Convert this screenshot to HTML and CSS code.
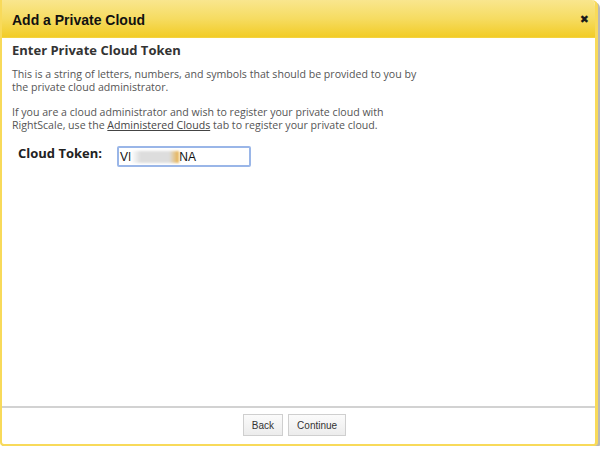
FILE: index.html
```html
<!DOCTYPE html>
<html>
<head>
<meta charset="utf-8">
<link rel="stylesheet" href="styles.css">
</head>
<body>
<div class="dialog">
  <div class="header">
    <span class="title">Add a Private Cloud</span>
    <span class="close">&#10006;</span>
  </div>
  <div class="content">
    <h2 class="heading">Enter Private Cloud Token</h2>
    <p class="text">This is a string of letters, numbers, and symbols that should be provided to you by<br>the private cloud administrator.</p>
    <p class="text">If you are a cloud administrator and wish to register your private cloud with<br>RightScale, use the <a class="link" href="#">Administered Clouds</a> tab to register your private cloud.</p>
    <div class="field">
      <label class="label">Cloud Token:</label>
      <div class="input"><span>VI</span><span class="blur"></span><span>NA</span></div>
    </div>
  </div>
  <div class="footer">
    <button class="btn">Back</button>
    <button class="btn">Continue</button>
  </div>
</div>
</body>
</html>
```
FILE: styles.css
```css
html, body { margin: 0; padding: 0; background: #fff; }
.dialog {
  width: 593px;
  height: 444px;
  border: 2px solid #f8da5a;
  border-right-width: 3px;
  border-top: 0;
  border-radius: 0 6px 4px 4px;
  box-shadow: 2px 2px 0 #b8b8b8;
  display: flex;
  flex-direction: column;
  background: #fff;
  overflow: hidden;
}
.header {
  height: 38px;
  flex: none;
  background: linear-gradient(#f9e68e, #f6dc62 50%, #f2cc26);
  border-bottom: 1px solid #f4d23e;
  display: flex;
  align-items: center;
  justify-content: space-between;
  padding: 0 6px 0 10px;
  box-sizing: border-box;
}
.title {
  font-family: "Liberation Sans", Arial, sans-serif;
  font-weight: bold;
  font-size: 14px;
  color: #111;
  position: relative;
  top: 1px;
}
.close {
  font-size: 11px;
  font-weight: bold;
  color: #1a1a1a;
  font-family: "DejaVu Sans", sans-serif;
  position: relative;
  top: 1px;
}
.content {
  flex: 1;
  padding: 3px 0 0 10px;
  font-family: "Open Sans", sans-serif;
  color: #555;
}
.heading {
  margin: 0 0 9px;
  font-size: 13px;
  font-weight: bold;
  color: #333;
}
.text {
  margin: 0 0 12px;
  font-size: 10.6px;
  line-height: 13px;
  color: #555;
}
.link { color: #444; }
.field {
  display: flex;
  align-items: flex-start;
  padding-left: 6px;
  margin-top: 14px;
}
.label {
  font-size: 13px;
  font-weight: bold;
  color: #222;
  width: 99px;
  line-height: 14px;
  padding-top: 0;
}
.input {
  width: 128px;
  height: 17px;
  border: 2px solid #9ab6e8;
  border-radius: 2px;
  padding: 0 1px 0 1px;
  font-family: "Liberation Sans", Arial, sans-serif;
  font-size: 12px;
  color: #111;
  display: flex;
  align-items: center;
}
.blur {
  display: inline-block;
  width: 48px;
  height: 12px;
  background: linear-gradient(90deg, #fff, #ddd 20%, #ddd 80%, #e8b04a);
  filter: blur(1px);
}
.footer {
  flex: none;
  height: 38px;
  border-top: 2px solid #d2d2d2;
  display: flex;
  justify-content: center;
  align-items: flex-start;
  gap: 5px;
  padding: 6px 8px 0 0;
  box-sizing: border-box;
}
.btn {
  font-family: "Liberation Sans", Arial, sans-serif;
  font-size: 10px;
  color: #333;
  background: linear-gradient(#fbfbfb, #ececec);
  border: 1px solid #cfcfcf;
  height: 22px;
  padding: 0 8px;
  margin: 0;
}
```
